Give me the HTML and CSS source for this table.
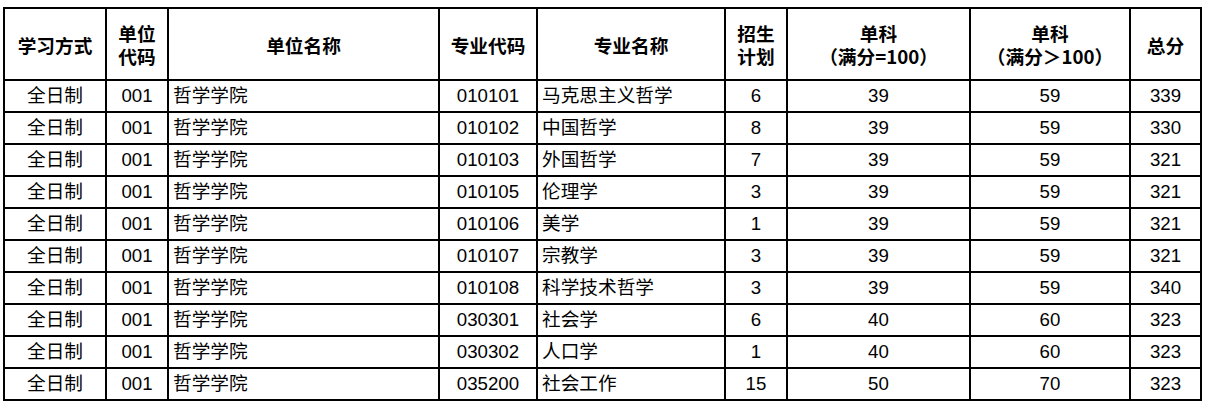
FILE: index.html
```html
<!DOCTYPE html>
<html lang="zh-CN">
<head>
<meta charset="utf-8">
<title>招生计划</title>
<link rel="stylesheet" href="styles.css">
</head>
<body>
<table class="plan">
  <colgroup>
    <col class="c-mode"><col class="c-unit"><col class="c-uname"><col class="c-code"><col class="c-name"><col class="c-num"><col class="c-s1"><col class="c-s2"><col class="c-total">
  </colgroup>
  <thead>
    <tr>
      <th>学习方式</th>
      <th><span class="ln">单位</span><span class="ln">代码</span></th>
      <th>单位名称</th>
      <th>专业代码</th>
      <th>专业名称</th>
      <th><span class="ln">招生</span><span class="ln">计划</span></th>
      <th><span class="ln">单科</span><span class="ln">（满分=100）</span></th>
      <th><span class="ln">单科</span><span class="ln">（满分＞100）</span></th>
      <th>总分</th>
    </tr>
  </thead>
  <tbody>
    <tr><td>全日制</td><td>001</td><td class="left">哲学学院</td><td>010101</td><td class="left">马克思主义哲学</td><td>6</td><td>39</td><td>59</td><td>339</td></tr>
    <tr><td>全日制</td><td>001</td><td class="left">哲学学院</td><td>010102</td><td class="left">中国哲学</td><td>8</td><td>39</td><td>59</td><td>330</td></tr>
    <tr><td>全日制</td><td>001</td><td class="left">哲学学院</td><td>010103</td><td class="left">外国哲学</td><td>7</td><td>39</td><td>59</td><td>321</td></tr>
    <tr><td>全日制</td><td>001</td><td class="left">哲学学院</td><td>010105</td><td class="left">伦理学</td><td>3</td><td>39</td><td>59</td><td>321</td></tr>
    <tr><td>全日制</td><td>001</td><td class="left">哲学学院</td><td>010106</td><td class="left">美学</td><td>1</td><td>39</td><td>59</td><td>321</td></tr>
    <tr><td>全日制</td><td>001</td><td class="left">哲学学院</td><td>010107</td><td class="left">宗教学</td><td>3</td><td>39</td><td>59</td><td>321</td></tr>
    <tr><td>全日制</td><td>001</td><td class="left">哲学学院</td><td>010108</td><td class="left">科学技术哲学</td><td>3</td><td>39</td><td>59</td><td>340</td></tr>
    <tr><td>全日制</td><td>001</td><td class="left">哲学学院</td><td>030301</td><td class="left">社会学</td><td>6</td><td>40</td><td>60</td><td>323</td></tr>
    <tr><td>全日制</td><td>001</td><td class="left">哲学学院</td><td>030302</td><td class="left">人口学</td><td>1</td><td>40</td><td>60</td><td>323</td></tr>
    <tr><td>全日制</td><td>001</td><td class="left">哲学学院</td><td>035200</td><td class="left">社会工作</td><td>15</td><td>50</td><td>70</td><td>323</td></tr>
  </tbody>
</table>
</body>
</html>
```
FILE: styles.css
```css
html, body {
  margin: 0;
  padding: 0;
  background: #fff;
}

body {
  padding: 7px 0 0 3px;
  font-family: "Liberation Sans", "Noto Sans CJK SC", sans-serif;
  font-size: 18.67px;
  color: #000;
}

.plan {
  table-layout: fixed;
  width: 1199px;
  border-collapse: separate;
  border-spacing: 2px;
  background: #000;
}

.c-mode { width: 100px; }
.c-unit { width: 60px; }
.c-uname { width: 269px; }
.c-code { width: 96px; }
.c-name { width: 186px; }
.c-num { width: 60px; }
.c-s1 { width: 181px; }
.c-s2 { width: 158px; }
.c-total { width: 69px; }

.plan th,
.plan td {
  background: #fff;
  padding: 0;
  text-align: center;
  vertical-align: middle;
  white-space: nowrap;
}

.plan th {
  height: 70px;
  font-family: "Noto Sans CJK SC", sans-serif;
  font-weight: bold;
  line-height: 23px;
}

.plan th .ln {
  display: block;
  height: 23px;
  line-height: 23px;
}

.plan td {
  height: 30px;
  line-height: 30px;
}

.plan td.left {
  text-align: left;
  padding-left: 4px;
}
```
